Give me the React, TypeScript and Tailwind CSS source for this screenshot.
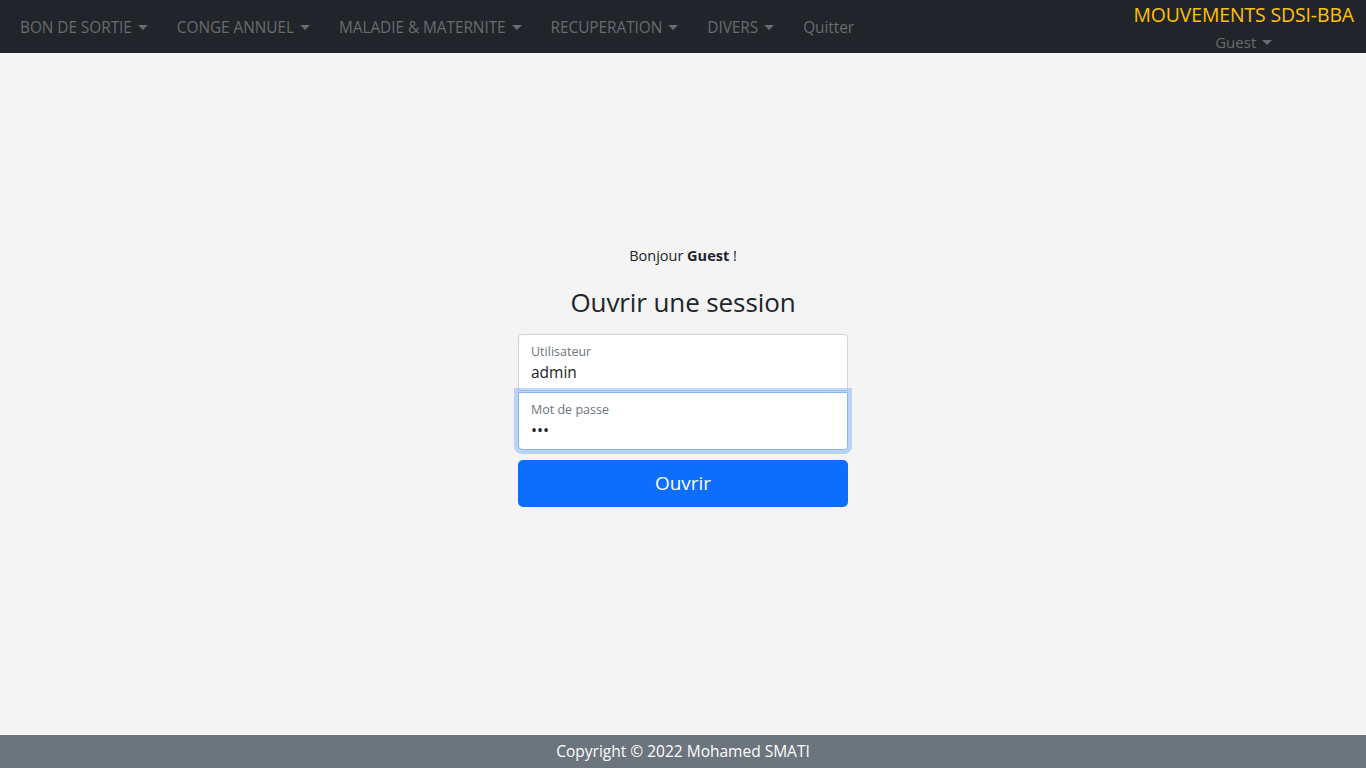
const font = { fontFamily: '"Open Sans", "Noto Sans", sans-serif' };

function Caret() {
  return (
    <span className="ml-[6px] inline-block h-0 w-0 border-x-[5px] border-t-[5px] border-x-transparent border-t-current align-middle" />
  );
}

const items = ["BON DE SORTIE", "CONGE ANNUEL", "MALADIE & MATERNITE", "RECUPERATION", "DIVERS"];

export default function App() {
  return (
    <div className="flex min-h-screen flex-col bg-[#f4f4f4] text-[#212529]" style={font}>
      <nav className="flex h-[53px] items-start justify-between bg-[#212529] px-3">
        <ul className="flex h-full items-center pt-[2px]">
          {items.map((t) => (
            <li key={t} className="mr-[13px] flex items-center px-2 text-[15.4px] tracking-[-0.05px] text-[#686b6f]">
              {t}
              <Caret />
            </li>
          ))}
          <li className="px-2 text-[15.4px] tracking-[-0.05px] text-[#686b6f]">Quitter</li>
        </ul>
        <div className="flex flex-col items-center pt-[2px]">
          <span className="text-[19.4px] leading-[26px] tracking-[-0.1px] text-[#ffc107]">MOUVEMENTS SDSI-BBA</span>
          <span className="mt-[3px] flex items-center text-[15px] leading-[22px] text-[#686b6f]">
            Guest
            <Caret />
          </span>
        </div>
      </nav>

      <main className="flex flex-1 flex-col items-center pt-[192px]">
        <p className="text-[14.5px] leading-[22px]">
          Bonjour <b>Guest</b> !
        </p>
        <h3 className="mt-[18px] text-[26px] leading-[34px] tracking-[-0.1px]">Ouvrir une session</h3>
        <form className="mt-[15px] flex w-[330px] flex-col">
          <div className="flex h-[57px] flex-col rounded-t-[4px] border border-[#ced4da] bg-white px-3 pt-[9px]">
            <label className="text-[12.5px] leading-[16px] text-[#6c757d]">Utilisateur</label>
            <input
              className="mt-[2px] bg-transparent text-[15.5px] leading-[20px] outline-none"
              defaultValue="admin"
            />
          </div>
          <div className="mt-[1px] flex h-[58px] flex-col rounded-b-[4px] border border-[#86b7fe] bg-white px-3 pt-[9px] shadow-[0_0_0_4px_rgba(13,110,253,0.25)]">
            <label className="text-[12.5px] leading-[16px] text-[#6c757d]">Mot de passe</label>
            <input
              type="password"
              className="mt-[2px] bg-transparent text-[16px] leading-[20px] outline-none"
              defaultValue="abc"
            />
          </div>
          <button
            type="button"
            className="mt-[10px] h-[47px] rounded-[5px] bg-[#0d6efd] text-[19px] text-white"
          >
            Ouvrir
          </button>
        </form>
      </main>

      <footer className="flex h-[33px] items-center justify-center bg-[#6c757d] text-[15.5px] text-white">
        Copyright © 2022 Mohamed SMATI
      </footer>
    </div>
  );
}
